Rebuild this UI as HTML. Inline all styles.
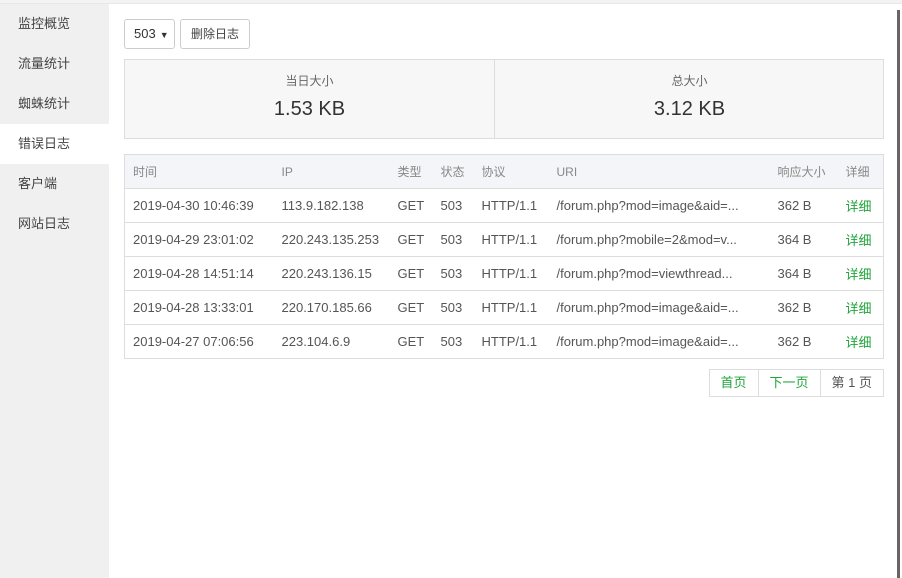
<!DOCTYPE html>
<html><head><meta charset="utf-8"><style>
*{margin:0;padding:0;box-sizing:border-box}
body{width:902px;height:578px;overflow:hidden;background:#fff;font-family:"Liberation Sans","Noto Sans CJK SC",sans-serif;color:#555;font-size:13px;position:relative}
.top{position:absolute;left:0;top:0;width:902px;height:4px;background:#f3f3f3;border-bottom:1px solid #e8e8e8}
.side{position:absolute;left:0;top:4px;width:109px;height:574px;background:#f0f0f0}
.side div{height:40px;line-height:40px;padding-left:18px;font-size:13px;color:#444}
.side .act{background:#fff}
.rb{position:absolute;right:2px;top:10px;width:3px;height:568px;background:#666}
.main{position:absolute;left:124px;top:19px;width:760px}
.sel{position:absolute;left:0;top:0;width:51px;height:30px;border:1px solid #ccc;border-radius:3px;line-height:28px;padding-left:9px;font-size:13px;color:#333}
.sel span{font-size:9px;margin-left:4px}
.btn{position:absolute;left:56px;top:0;width:70px;height:30px;border:1px solid #ccc;border-radius:3px;line-height:28px;text-align:center;font-size:12px;color:#444}
.stats{position:absolute;left:0;top:40px;width:760px;height:80px;background:#f7f7f7;border:1px solid #ddd}
.c{position:absolute;top:0;height:78px;text-align:center}
.c1{left:0;width:370px;border-right:1px solid #ddd}
.c2{left:371px;width:387px}
.l{font-size:12px;color:#666;margin-top:12px}
.v{font-size:20px;color:#333;margin-top:9px}
table{position:absolute;left:0;top:135px;width:760px;border-collapse:collapse;border:1px solid #ddd}
td,th{height:34px;border-bottom:1px solid #ddd;text-align:left;font-weight:normal;font-size:13px;padding-left:8px;white-space:nowrap}
th{background:#f4f5f8;color:#888;font-size:12px}
td{color:#555}
.g{color:#20a53a}
.pg{position:absolute;right:0;top:350px;display:flex;border:1px solid #ddd;height:28px}
.pg div{line-height:26px;padding:0 11px;font-size:13px}
.pg div+div{border-left:1px solid #ddd}
</style></head><body>
<div class="top"></div>
<div class="side">
<div>监控概览</div><div>流量统计</div><div>蜘蛛统计</div><div class="act">错误日志</div><div>客户端</div><div>网站日志</div>
</div>
<div class="rb"></div>
<div class="main">
<div class="sel">503<span>▼</span></div>
<div class="btn">删除日志</div>
<div class="stats"><div class="c c1"><div class="l">当日大小</div><div class="v">1.53 KB</div></div><div class="c c2"><div class="l">总大小</div><div class="v">3.12 KB</div></div></div>
<table>
<tr><th style="width:149px">时间</th><th style="width:116px">IP</th><th style="width:43px">类型</th><th style="width:41px">状态</th><th style="width:75px">协议</th><th style="width:221px">URI</th><th style="width:68px">响应大小</th><th>详细</th></tr>
<tr><td>2019-04-30 10:46:39</td><td>113.9.182.138</td><td>GET</td><td>503</td><td>HTTP/1.1</td><td>/forum.php?mod=image&amp;aid=...</td><td>362 B</td><td class="g">详细</td></tr>
<tr><td>2019-04-29 23:01:02</td><td>220.243.135.253</td><td>GET</td><td>503</td><td>HTTP/1.1</td><td>/forum.php?mobile=2&amp;mod=v...</td><td>364 B</td><td class="g">详细</td></tr>
<tr><td>2019-04-28 14:51:14</td><td>220.243.136.15</td><td>GET</td><td>503</td><td>HTTP/1.1</td><td>/forum.php?mod=viewthread...</td><td>364 B</td><td class="g">详细</td></tr>
<tr><td>2019-04-28 13:33:01</td><td>220.170.185.66</td><td>GET</td><td>503</td><td>HTTP/1.1</td><td>/forum.php?mod=image&amp;aid=...</td><td>362 B</td><td class="g">详细</td></tr>
<tr><td>2019-04-27 07:06:56</td><td>223.104.6.9</td><td>GET</td><td>503</td><td>HTTP/1.1</td><td>/forum.php?mod=image&amp;aid=...</td><td>362 B</td><td class="g">详细</td></tr>
</table>
<div class="pg"><div class="g">首页</div><div class="g">下一页</div><div>第 1 页</div></div>
</div>
</body></html>
